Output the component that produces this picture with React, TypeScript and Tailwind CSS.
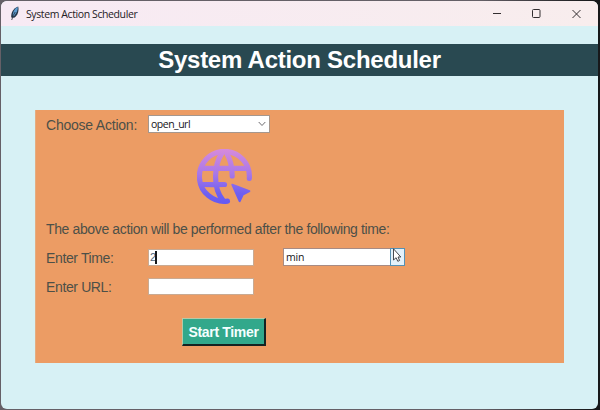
import React from "react";

function Label({ children, className = "tracking-[-0.37px]" }: { children: React.ReactNode; className?: string }) {
  return <span className={`block whitespace-nowrap text-[14px] leading-[18px] text-[#4c5048] ${className}`}>{children}</span>;
}

function FeatherIcon() {
  return (
    <svg className="ml-[9px] h-[15px] w-[10px] shrink-0" viewBox="0 0 10 15">
      <path d="M1.2 11.6C.8 6.8 3.4 2 8.2.5C9.2 4.2 8 9.4 4.2 11.8Z" fill="#253649" />
      <path d="M2.8 9.5C2.8 6 4.8 2.4 7.8 1.1C8.2 4.2 6.4 7.6 3.8 10.4Z" fill="#5b9bd0" />
      <path d="M1.7 14L3.3 9.5L5.2 6" stroke="#26313d" strokeWidth=".8" fill="none" />
    </svg>
  );
}

function TitleBar() {
  return (
    <header className="flex h-[25px] shrink-0 items-center bg-linear-to-r from-[#f7eaf4] to-[#f8eded]">
      <FeatherIcon />
      <span className="ml-[6px] grow whitespace-nowrap font-['Open_Sans',sans-serif] text-[10.5px] leading-[14px] tracking-[-0.4px] text-[#242024]">
        System Action Scheduler
      </span>
      <svg className="h-[12px] w-[90px] shrink-0" viewBox="0 0 90 12" fill="none" stroke="#332e30" strokeWidth="1">
        <path d="M1 5.5H9" />
        <rect x="40.5" y="1.5" width="7.5" height="8" rx="1" />
        <path d="M80.5 2L88.5 10M88.5 2L80.5 10" />
      </svg>
      <span className="w-[16px] shrink-0" />
    </header>
  );
}

function GlobeIcon() {
  return (
    <svg className="block h-[56px] w-[56px]" viewBox="0 0 56 56">
      <defs>
        <linearGradient id="globe" x1="0" y1="0" x2="0" y2="56" gradientUnits="userSpaceOnUse">
          <stop stopColor="#d68bdc" />
          <stop offset=".45" stopColor="#a877e8" />
          <stop offset=".8" stopColor="#6f5ff0" />
          <stop offset="1" stopColor="#6459f3" />
        </linearGradient>
      </defs>
      <g fill="none" stroke="url(#globe)" strokeWidth="5.2" strokeLinecap="round">
        <path d="M52.3 29.5A25 25 0 1 0 30.5 52.2" />
        <path d="M5 19.4C20 19.5 36 19.5 50.5 19.4" />
        <path d="M4.5 35.5C13 35.6 20 35.6 27.5 35.5" />
        <path d="M25 4C17 16 15.5 39 26 51.5" />
        <path d="M29.5 4C33.5 10.5 35.2 18.5 35.2 27" />
      </g>
      <path d="M35.3 35.7L52.4 42.2L45.7 45.7L42.6 52.2Z" fill="url(#globe)" stroke="url(#globe)" strokeWidth="2" strokeLinejoin="round" />
    </svg>
  );
}

function Panel() {
  return (
    <section className="mx-auto flex h-[253px] w-[529px] flex-col border-l border-[#e3ad82] bg-[#ec9c64] pl-[10px] pt-[5px]">
      <div className="flex h-[19px] items-center">
        <Label className="w-[102px] tracking-[-0.22px]">Choose Action:</Label>
        <div className="mb-px flex h-[18px] w-[122px] items-center justify-between border border-[#a5978e] bg-white pl-[2px] pr-[3px]">
          <span className="font-['Open_Sans',sans-serif] text-[10.5px] font-medium leading-[14px] tracking-[-0.5px] text-[#171519]">open_url</span>
          <svg className="h-[6px] w-[8px]" viewBox="0 0 8 6" fill="none" stroke="#6d6c70">
            <path d="M.7 1L4 4.5L7.3 1" />
          </svg>
        </div>
      </div>
      <div className="ml-[151px] mt-[15px] h-[56px]"><GlobeIcon /></div>
      <Label className="mt-[15px] tracking-[-0.37px]">The above action will be performed after the following time:</Label>
      <div className="mt-[10px] flex h-[19px] items-center">
        <Label className="w-[102px] tracking-[-0.37px]">Enter Time:</Label>
        <div className="flex h-[17px] w-[106px] items-center border border-[#c9aa92] bg-white pl-px">
          <span className="w-[6px] text-[11px] leading-[13px] text-[#50677a]">2</span>
          <span className="-ml-px h-[13px] w-[2px] bg-[#16191c]" />
        </div>
        <div className="mb-px ml-[29px] flex h-[18px] w-[122px] border border-[#a78b84] bg-white">
          <span className="grow pl-[2px] font-['Open_Sans',sans-serif] text-[10.5px] font-medium leading-[16px] tracking-[-0.2px] text-[#171519]">min</span>
          <span className="relative -my-px -mr-px w-[15px] border border-[#5591b5] bg-[#e3f1fa]">
            <svg className="absolute -top-px left-0 h-[15px] w-[10px]" viewBox="0 0 10 15">
              <path d="M2.5.8V12L5.1 9.7L6.8 13.3L8.6 12.5L7 9H9.8Z" fill="#fff" stroke="#33363b" strokeWidth=".9" />
            </svg>
          </span>
        </div>
      </div>
      <div className="mt-[10px] flex h-[19px] items-center">
        <Label className="w-[102px] tracking-[-0.37px]">Enter URL:</Label>
        <div className="h-[17px] w-[106px] border border-[#c9aa92] bg-white" />
      </div>
      <button className="ml-[136px] mt-[22px] flex h-[28px] w-[84px] items-center justify-center whitespace-nowrap border border-b-2 border-r-2 border-b-[#142322] border-l-[#b5caa8] border-r-[#142322] border-t-[#b5caa8] bg-[#32a88b] text-[14px] font-bold leading-[18px] tracking-[-0.32px] text-[#f4ffff]">
        Start Timer
      </button>
    </section>
  );
}

export default function App() {
  return (
    <main className="h-[410px] w-[600px] overflow-hidden bg-[#17181a] bg-linear-to-r from-[#656067] from-80% to-[#17181a] to-99% pl-px pt-px font-['Liberation_Sans',Arial,sans-serif]">
      <div className="flex h-[408px] w-[597px] flex-col overflow-hidden rounded-[6px] bg-[#d7f1f5]">
        <TitleBar />
        <h1 className="mt-[18px] flex h-[32px] shrink-0 items-center justify-center whitespace-nowrap bg-[#294951] text-[24px] font-bold leading-[28px] tracking-[-0.26px] text-white">
          System Action Scheduler
        </h1>
        <div className="mt-[34px]"><Panel /></div>
      </div>
    </main>
  );
}
